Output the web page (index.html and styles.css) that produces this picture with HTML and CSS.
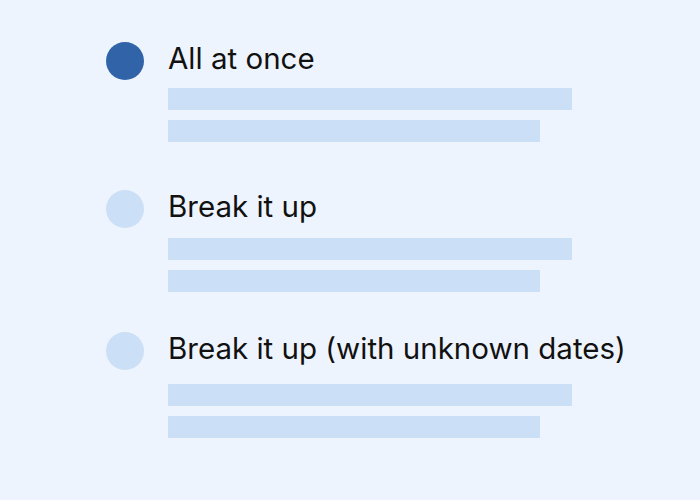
FILE: index.html
```html
<!DOCTYPE html>
<html>
<head>
<meta charset="utf-8">
<link rel="stylesheet" href="styles.css">
</head>
<body>
<div class="list">
  <div class="option option-first">
    <div class="dot dot-active"></div>
    <div class="content">
      <div class="title">All at once</div>
      <div class="bars bars-a">
        <div class="bar bar-long"></div>
        <div class="bar bar-short"></div>
      </div>
    </div>
  </div>
  <div class="option option-second">
    <div class="dot"></div>
    <div class="content">
      <div class="title">Break it up</div>
      <div class="bars bars-b">
        <div class="bar bar-long"></div>
        <div class="bar bar-short"></div>
      </div>
    </div>
  </div>
  <div class="option option-third">
    <div class="dot"></div>
    <div class="content">
      <div class="title">Break it up (with unknown dates)</div>
      <div class="bars bars-c">
        <div class="bar bar-long"></div>
        <div class="bar bar-short"></div>
      </div>
    </div>
  </div>
</div>
</body>
</html>
```
FILE: styles.css
```css
html, body {
  margin: 0;
  padding: 0;
  background: #eef4fd;
  width: 700px;
  height: 500px;
  overflow: hidden;
}
.list {
  display: flex;
  flex-direction: column;
  padding: 42px 0 0 106px;
}
.option {
  display: flex;
  gap: 24px;
  align-items: flex-start;
}
.option-second { margin-top: 48px; }
.option-third { margin-top: 40px; }
.dot {
  width: 38px;
  height: 38px;
  border-radius: 50%;
  background: #cbdff6;
  flex: none;
}
.dot-active { background: #3063a8; }
.content {
  display: flex;
  flex-direction: column;
}
.title {
  font-family: "Inter", "Liberation Sans", sans-serif;
  font-size: 29.5px;
  line-height: 32px;
  color: #111;
  white-space: nowrap;
}
.bars {
  display: flex;
  flex-direction: column;
  gap: 10px;
}
.bars-a { margin-top: 14px; }
.bars-b { margin-top: 16px; }
.bars-c { margin-top: 20px; }
.bar {
  height: 22px;
  background: #cbdff6;
}
.bar-long { width: 404px; }
.bar-short { width: 372px; }
```
